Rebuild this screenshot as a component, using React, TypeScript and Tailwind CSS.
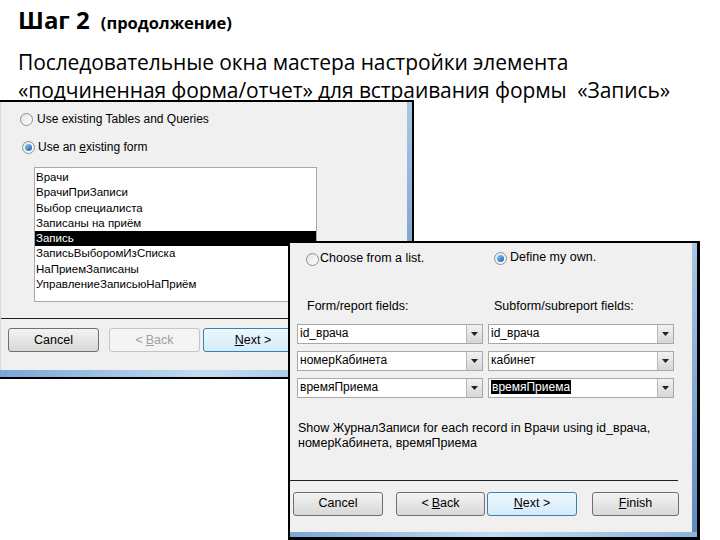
import React from "react";

const dlg = { fontFamily: '"Liberation Sans", Arial, sans-serif' };

const Radio = ({ checked }: { checked?: boolean }) => (
  <span className="inline-flex w-[13px] h-[13px] rounded-full border border-[#8e8f8f] bg-gradient-to-br from-[#e4e4e4] to-[#ffffff] items-center justify-center shrink-0">
    {checked && <span className="w-[7px] h-[7px] rounded-full bg-gradient-to-br from-[#8ad2ff] to-[#1a5aa6]" />}
  </span>
);

const Btn = ({
  children,
  focused,
  disabled,
  w,
}: {
  children: React.ReactNode;
  focused?: boolean;
  disabled?: boolean;
  w: string;
}) => (
  <div
    className={
      "h-[24px] flex items-center justify-center rounded-[3px] border text-[12.5px] " +
      w +
      " " +
      (focused
        ? "border-[#3c7fb1] bg-gradient-to-b from-[#eef7fd] to-[#d3ebfa] text-black"
        : disabled
        ? "border-[#c5c5c5] bg-[#f4f4f4] text-[#a0a0a0]"
        : "border-[#707070] bg-gradient-to-b from-[#f3f3f3] to-[#d8d8d8] text-black")
    }
  >
    {children}
  </div>
);

const Combo = ({ text, selected }: { text: string; selected?: boolean }) => (
  <div className="w-[186px] h-[20px] bg-white border border-[#a8a8a8] flex items-center pl-[2px]">
    <span className="flex-1 text-[12px] leading-[15px] text-black">
      <span className={selected ? "bg-black text-white px-[1px]" : ""}>{text}</span>
    </span>
    <span className="w-[16px] h-[18px] border-l border-[#b8b8b8] bg-gradient-to-b from-[#f2f2f2] to-[#d6d6d6] flex items-center justify-center">
      <svg width="7" height="4" viewBox="0 0 7 4">
        <path d="M0 0h7L3.5 4z" fill="#222" />
      </svg>
    </span>
  </div>
);

export default function App() {
  const items = [
    "Врачи",
    "ВрачиПриЗаписи",
    "Выбор специалиста",
    "Записаны на приём",
    "Запись",
    "ЗаписьВыборомИзСписка",
    "НаПриемЗаписаны",
    "УправлениеЗаписьюНаПриём",
  ];

  return (
    <div className="relative w-[720px] h-[540px] overflow-hidden bg-white text-black">
      {/* Заголовок слайда */}
      <div className="px-[18px] pt-[4px]" style={{ fontFamily: '"Open Sans", "Noto Sans", sans-serif' }}>
        <div className="flex items-baseline gap-[11px]">
          <span className="text-[24px] font-bold leading-[32px]">Шаг 2</span>
          <span className="text-[16.5px] font-bold">(продолжение)</span>
        </div>
        <div className="mt-[12px] text-[21px] leading-[28px] tracking-[-0.1px]">
          <div>Последовательные окна мастера настройки элемента</div>
          <div>«подчиненная форма/отчет» для встраивания формы&nbsp; «Запись»</div>
        </div>
      </div>

      {/* Первое окно мастера */}
      <div
        className="absolute left-0 top-[100px] w-[414px] h-[279px] border-t-2 border-r-2 border-b-2 border-black flex flex-col"
        style={dlg}
      >
        <div className="flex flex-1">
          <div className="flex-1 bg-[#f0f0f0] border-l border-[#d8d8d8] flex flex-col">
            <div className="flex items-center gap-[4px] pl-[19px] mt-[8px] text-[12px]">
              <Radio />
              <span>Use existing Tables and Queries</span>
            </div>
            <div className="flex items-center gap-[3px] pl-[21px] mt-[10px] text-[12px]">
              <Radio checked />
              <span>Use an <span className="underline">e</span>xisting form</span>
            </div>
            <div className="ml-[33px] mt-[11px] w-[283px] h-[135px] bg-white border border-[#a8a8a8] pt-[2px] text-[11.5px]">
              {items.map((it) => (
                <div
                  key={it}
                  className={"h-[15.3px] leading-[15px] pl-[1px] " + (it === "Запись" ? "bg-black text-white" : "")}
                >
                  {it}
                </div>
              ))}
            </div>
            <div className="mt-[16px] h-[1px] bg-[#202020]" />
            <div className="flex pl-[7px] mt-[9px]">
              <Btn w="w-[91px]">Cancel</Btn>
              <div className="w-[10px]" />
              <Btn w="w-[91px]" disabled>
                &lt; <span className="underline ml-[3px]">B</span>ack
              </Btn>
              <div className="w-[3px]" />
              <Btn w="w-[100px]" focused>
                <span className="underline">N</span>ext &gt;
              </Btn>
            </div>
          </div>
          <div className="w-[5px] bg-gradient-to-b from-[#a9c7e6] to-[#5c8cc0]" />
        </div>
        <div className="h-[7px] bg-gradient-to-r from-[#7aa7d6] via-[#c4dcf2] to-[#8ab3dd]" />
      </div>

      {/* Второе окно мастера */}
      <div
        className="absolute left-[288px] top-[241px] w-[412px] h-[299px] border-l-2 border-t-2 border-r-[3px] border-b-[3px] border-black flex flex-col"
        style={dlg}
      >
        <div className="flex flex-1">
          <div className="flex-1 bg-[#f0f0f0] flex flex-col">
            <div className="flex mt-[6px] text-[12.5px]">
              <div className="w-[204px] flex items-center gap-[1px] pl-[16px] pt-[3px]">
                <Radio />
                <span className="-mt-[3px]">Choose from a list.</span>
              </div>
              <div className="flex items-center gap-[3px]">
                <Radio checked />
                <span className="-mt-[3px]">Define my own.</span>
              </div>
            </div>
            <div className="flex mt-[31px] text-[12.5px] leading-[15px]">
              <div className="w-[204px] pl-[17px]">Form/report fields:</div>
              <div>Subform/subreport fields:</div>
            </div>
            <div className="flex flex-col gap-[7px] mt-[10px] pl-[7px]">
              <div className="flex gap-[5px]">
                <Combo text="id_врача" />
                <Combo text="id_врача" />
              </div>
              <div className="flex gap-[5px]">
                <Combo text="номерКабинета" />
                <Combo text="кабинет" />
              </div>
              <div className="flex gap-[5px]">
                <Combo text="времяПриема" />
                <Combo text="времяПриема" selected />
              </div>
            </div>
            <div className="mt-[23px] pl-[8px] text-[12.5px] leading-[15px]">
              <div>Show ЖурналЗаписи for each record in Врачи using id_врача,</div>
              <div>номерКабинета, времяПриема</div>
            </div>
            <div className="mt-[29px] mr-[14px] h-[1px] bg-[#202020]" />
            <div className="flex pl-[3px] mt-[11px]">
              <Btn w="w-[90px]">Cancel</Btn>
              <div className="w-[13px]" />
              <Btn w="w-[89px]">
                &lt; <span className="underline ml-[3px]">B</span>ack
              </Btn>
              <div className="w-[2px]" />
              <Btn w="w-[90px]" focused>
                <span className="underline">N</span>ext &gt;
              </Btn>
              <div className="w-[15px]" />
              <Btn w="w-[87px]">
                <span className="underline">F</span>inish
              </Btn>
            </div>
          </div>
          <div className="w-[5px] bg-gradient-to-b from-[#a9c7e6] to-[#5c8cc0]" />
        </div>
        <div className="h-[5px] bg-gradient-to-r from-[#7aa7d6] via-[#c4dcf2] to-[#8ab3dd]" />
      </div>
    </div>
  );
}
